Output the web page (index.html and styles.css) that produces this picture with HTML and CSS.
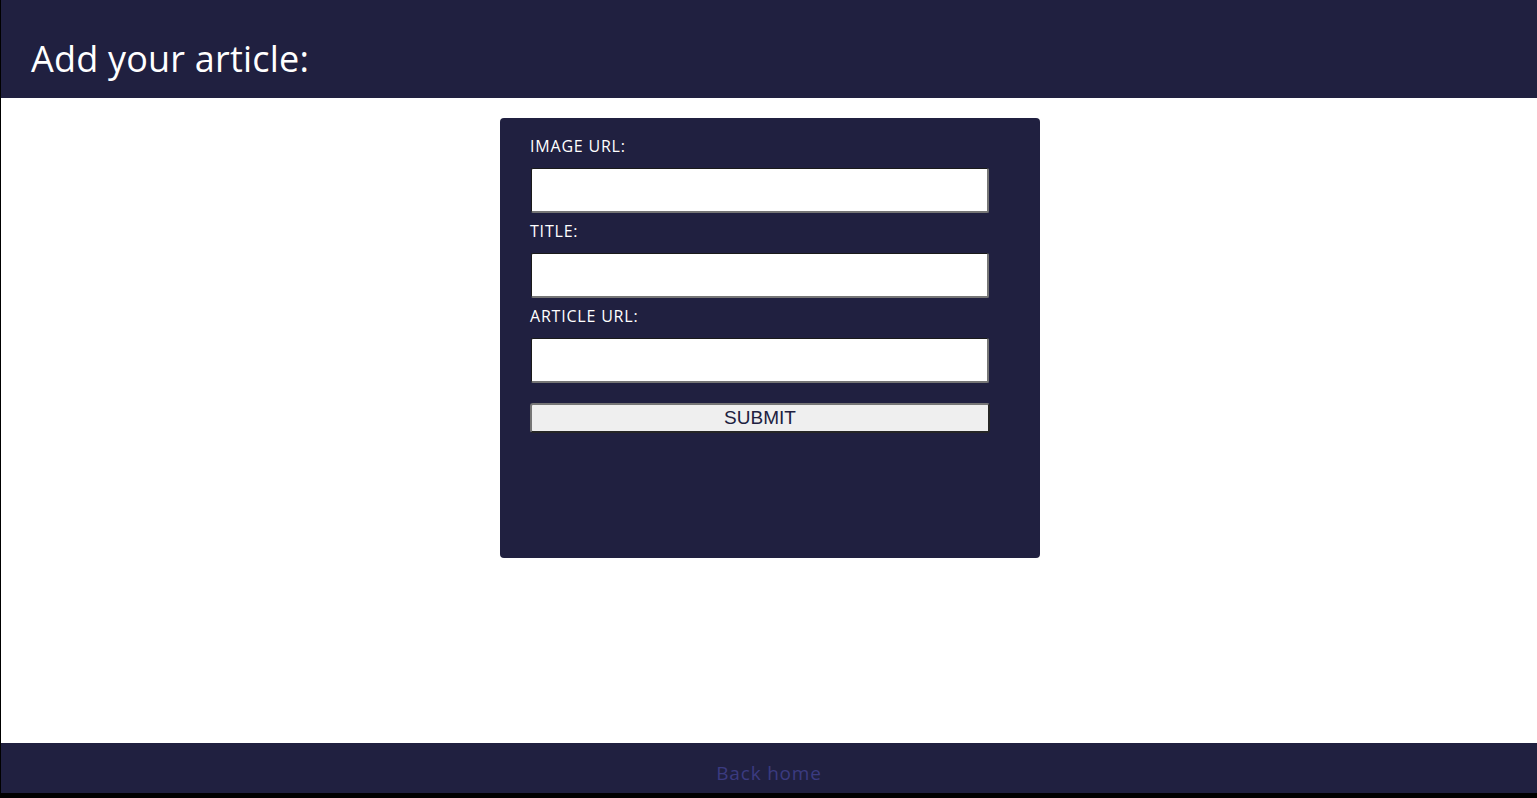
FILE: index.html
```html
<!DOCTYPE html>
<html lang="en">
<head>
<meta charset="utf-8">
<title>Add your article</title>
<link rel="stylesheet" href="styles.css">
</head>
<body>
<header class="site-header">
  <h1 class="page-title">Add your article:</h1>
</header>
<main class="content">
  <form class="article-form">
    <label class="field-label" for="img">IMAGE URL:</label>
    <input class="field-input" id="img" type="text">
    <label class="field-label" for="title">TITLE:</label>
    <input class="field-input" id="title" type="text">
    <label class="field-label" for="url">ARTICLE URL:</label>
    <input class="field-input" id="url" type="text">
    <button class="submit-btn" type="button">SUBMIT</button>
  </form>
</main>
<footer class="site-footer">
  <a class="home-link" href="#">Back home</a>
</footer>
</body>
</html>
```

FILE: styles.css
```css
html {
  background: #000;
  height: 100%;
}
body {
  margin: 0 0 0 1px;
  height: 793px;
  background: #fff;
  display: flex;
  flex-direction: column;
  font-family: "Open Sans", "Liberation Sans", sans-serif;
}
.site-header {
  height: 98px;
  background: #202040;
  display: flex;
  align-items: center;
  padding-left: 30px;
  box-sizing: border-box;
  flex: none;
}
.page-title {
  margin: 18px 0 0 0;
  font-weight: 400;
  font-size: 36px;
  color: #fff;
  letter-spacing: 0.2px;
}
.content {
  flex: 1;
  padding: 20px 0 0 2px;
}
.article-form {
  width: 540px;
  height: 440px;
  box-sizing: border-box;
  margin: 0 auto;
  background: #202040;
  border-radius: 4px;
  padding: 18px 30px 0 30px;
  display: flex;
  flex-direction: column;
  align-items: flex-start;
}
.field-label {
  color: #fff;
  font-size: 16px;
  line-height: 21px;
  margin-bottom: 11px;
  letter-spacing: 0.8px;
}
.field-input {
  width: 458px;
  height: 45px;
  box-sizing: border-box;
  margin: 0 0 8px 1px;
  background: #fff;
  border-top: 1px solid #1a1a1a;
  border-left: 1px solid #1a1a1a;
  border-right: 2px solid #767676;
  border-bottom: 2px solid #767676;
  border-radius: 2px;
  padding: 0 6px;
  font-size: 16px;
  outline: none;
}
.submit-btn {
  margin-top: 12px;
  width: 460px;
  height: 30px;
  box-sizing: border-box;
  background: #efefef;
  border-top: 2px solid #767676;
  border-left: 2px solid #767676;
  border-right: 2px solid #262626;
  border-bottom: 2px solid #262626;
  border-radius: 3px;
  font-family: "Liberation Sans", Arial, sans-serif;
  font-size: 19px;
  color: #202040;
  padding: 0;
  line-height: 24px;
}
.site-footer {
  height: 50px;
  flex: none;
  background: #202040;
  display: flex;
  align-items: center;
  justify-content: center;
  padding-top: 10px;
  box-sizing: border-box;
}
.home-link {
  color: #3b3b80;
  text-decoration: none;
  font-size: 19px;
  letter-spacing: 0.8px;
}
```
